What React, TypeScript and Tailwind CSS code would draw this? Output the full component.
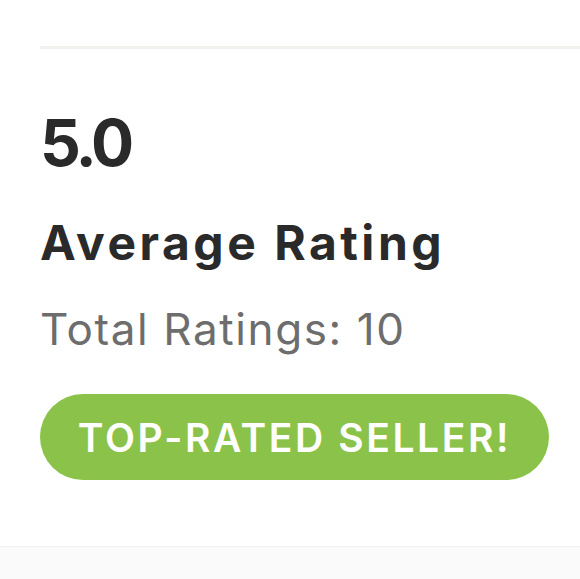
export default function App() {
  return (
    <div className="min-h-[579px] bg-white flex flex-col" style={{ fontFamily: 'Inter, "Liberation Sans", sans-serif' }}>
      <div className="pl-[40px] pt-[46px] flex-1">
        <div className="h-[3px] bg-[#f3f1ee]" />

        <div className="pr-[31px]">
          <h2 className="mt-[62px] text-[64px] leading-none font-bold tracking-[-4px] text-[#2a2a2a]">5.0</h2>
          <h3 className="mt-[44px] text-[48px] leading-none font-bold tracking-[3.5px] text-[#2a2a2a]">Average Rating</h3>
          <p className="mt-[40px] text-[44px] leading-none tracking-[1.6px] text-[#6d6d6d]">Total Ratings: 10</p>

          <div className="mt-[43px] h-[86px] rounded-full bg-[#8bc34a] flex items-center justify-center">
            <span className="text-[39px] leading-none font-semibold tracking-[2.6px] text-white uppercase">Top-Rated Seller!</span>
          </div>
        </div>
      </div>

      <div className="h-[33px] bg-[#fafafa] border-t border-[#f4f2ef]" />
    </div>
  );
}
